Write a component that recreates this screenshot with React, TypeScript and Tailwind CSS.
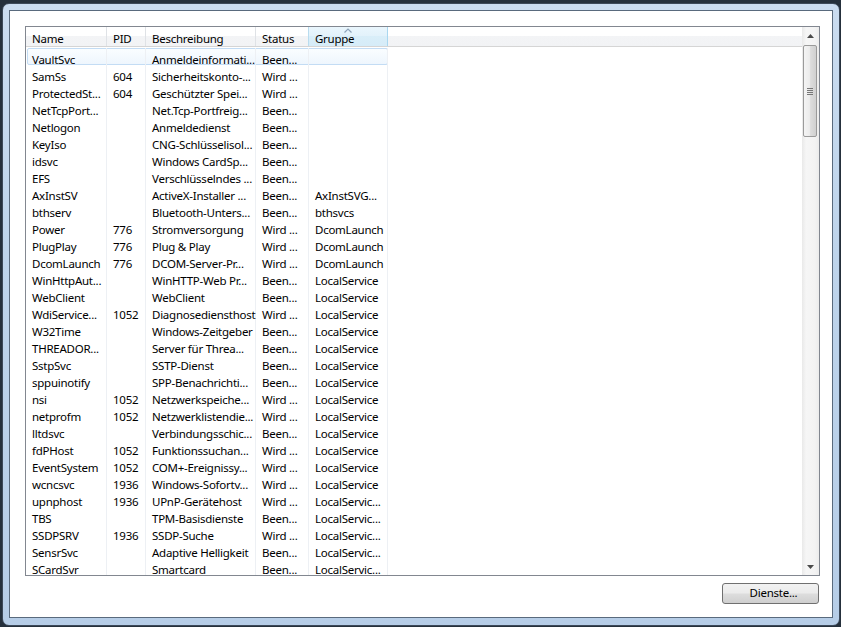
import React from 'react';

type Row = [string, string, string, string, string];

const rows: Row[] = [
  ['VaultSvc', '', 'Anmeldeinformati...', 'Been...', ''],
  ['SamSs', '604', 'Sicherheitskonto-...', 'Wird ...', ''],
  ['ProtectedSt...', '604', 'Geschützter Spei...', 'Wird ...', ''],
  ['NetTcpPort...', '', 'Net.Tcp-Portfreig...', 'Been...', ''],
  ['Netlogon', '', 'Anmeldedienst', 'Been...', ''],
  ['KeyIso', '', 'CNG-Schlüsselisol...', 'Been...', ''],
  ['idsvc', '', 'Windows CardSp...', 'Been...', ''],
  ['EFS', '', 'Verschlüsselndes ...', 'Been...', ''],
  ['AxInstSV', '', 'ActiveX-Installer ...', 'Been...', 'AxInstSVG...'],
  ['bthserv', '', 'Bluetooth-Unters...', 'Been...', 'bthsvcs'],
  ['Power', '776', 'Stromversorgung', 'Wird ...', 'DcomLaunch'],
  ['PlugPlay', '776', 'Plug & Play', 'Wird ...', 'DcomLaunch'],
  ['DcomLaunch', '776', 'DCOM-Server-Pr...', 'Wird ...', 'DcomLaunch'],
  ['WinHttpAut...', '', 'WinHTTP-Web Pr...', 'Been...', 'LocalService'],
  ['WebClient', '', 'WebClient', 'Been...', 'LocalService'],
  ['WdiService...', '1052', 'Diagnosediensthost', 'Wird ...', 'LocalService'],
  ['W32Time', '', 'Windows-Zeitgeber', 'Been...', 'LocalService'],
  ['THREADOR...', '', 'Server für Threa...', 'Been...', 'LocalService'],
  ['SstpSvc', '', 'SSTP-Dienst', 'Been...', 'LocalService'],
  ['sppuinotify', '', 'SPP-Benachrichti...', 'Been...', 'LocalService'],
  ['nsi', '1052', 'Netzwerkspeiche...', 'Wird ...', 'LocalService'],
  ['netprofm', '1052', 'Netzwerklistendie...', 'Wird ...', 'LocalService'],
  ['lltdsvc', '', 'Verbindungsschic...', 'Been...', 'LocalService'],
  ['fdPHost', '1052', 'Funktionssuchan...', 'Wird ...', 'LocalService'],
  ['EventSystem', '1052', 'COM+-Ereignissy...', 'Wird ...', 'LocalService'],
  ['wcncsvc', '1936', 'Windows-Sofortv...', 'Wird ...', 'LocalService'],
  ['upnphost', '1936', 'UPnP-Gerätehost', 'Wird ...', 'LocalServic...'],
  ['TBS', '', 'TPM-Basisdienste', 'Been...', 'LocalServic...'],
  ['SSDPSRV', '1936', 'SSDP-Suche', 'Wird ...', 'LocalServic...'],
  ['SensrSvc', '', 'Adaptive Helligkeit', 'Been...', 'LocalServic...'],
  ['SCardSvr', '', 'Smartcard', 'Been...', 'LocalServic...'],
];

// widths include the 1px separator on the right
const colWidths = ['w-[81px]', 'w-[39px]', 'w-[110px]', 'w-[53px]', 'w-[79px]'];
const headers = ['Name', 'PID', 'Beschreibung', 'Status', 'Gruppe'];

function Arrow({ down }: { down?: boolean }) {
  return (
    <svg width="7" height="4" viewBox="0 0 7 4">
      <polygon points={down ? '0,0 7,0 3.5,4' : '0,4 7,4 3.5,0'} fill="#4a4a4a" />
    </svg>
  );
}

function Header() {
  return (
    <div className="flex h-[23px] border-b border-[#d5d5d5] bg-[linear-gradient(180deg,#ffffff_0%,#ffffff_45%,#f3f4f6_46%,#f2f3f5_100%)]">
      {headers.map((h, i) => {
        const sorted = i === 4;
        return (
          <div
            key={h}
            className={`${colWidths[i]} relative flex h-full shrink-0 items-center border-r pl-[6px] pt-[5px] ${
              sorted
                ? 'border-[#a9d7f0] bg-[linear-gradient(180deg,#eaf6fd_0%,#e3f2fb_45%,#d9eef9_46%,#d6ecf8_100%)]'
                : i === 3
                ? 'border-[#b9dcef]'
                : 'border-[#dfe2e6]'
            }`}
          >
            {sorted && (
              <svg className="absolute left-[35px] top-[1px]" width="8" height="5" viewBox="0 0 8 5">
                <polyline points="0.5,4.5 4,1 7.5,4.5" fill="none" stroke="#8ea4bb" strokeWidth="1.2" />
              </svg>
            )}
            {h}
          </div>
        );
      })}
      <div className="flex-1" />
    </div>
  );
}

function Scrollbar() {
  return (
    <div className="flex w-[17px] shrink-0 flex-col bg-[linear-gradient(90deg,#e9e9e9_0%,#f6f6f6_25%,#f3f3f3_75%,#ececec_100%)]">
      <div className="flex h-[17px] items-center justify-center">
        <Arrow />
      </div>
      <div className="mx-[1px] mt-[1px] flex h-[92px] w-[14px] items-center justify-center rounded-[2px] border border-[#9a9a9a] bg-[linear-gradient(90deg,#f4f4f4_0%,#ececec_45%,#dcdcdc_55%,#d0d0d0_100%)]">
        <div className="flex flex-col gap-[1px]">
          <div className="h-[1px] w-[6px] bg-[#777]" />
          <div className="h-[1px] w-[6px] bg-[#777]" />
          <div className="h-[1px] w-[6px] bg-[#777]" />
          <div className="h-[1px] w-[6px] bg-[#777]" />
        </div>
      </div>
      <div className="flex-1" />
      <div className="flex h-[17px] items-center justify-center">
        <Arrow down />
      </div>
    </div>
  );
}

function ServiceList() {
  return (
    <div className="flex h-[550px] w-[795px] border border-[#828790] bg-white">
      <div className="flex min-w-0 flex-1 flex-col overflow-hidden">
        <Header />
        <div className="pt-[1px]">
          {rows.map((r, idx) => (
            <div key={idx} className="relative flex h-[17px]">
              {idx === 0 && (
                <div className="absolute left-[1px] top-0 h-[17px] w-[361px] rounded-[2px] border border-[#c3dcf4] bg-[linear-gradient(180deg,#fafdff_0%,#eef6fd_100%)]" />
              )}
              {r.map((c, i) => (
                <div
                  key={i}
                  className={`${colWidths[i]} relative h-full shrink-0 whitespace-nowrap border-r border-[#edf0f4] pl-[6px] pt-[6px] leading-[11px]`}
                >
                  {c}
                </div>
              ))}
            </div>
          ))}
        </div>
      </div>
      <Scrollbar />
    </div>
  );
}

export default function App() {
  return (
    <div className="h-[627px] w-[841px] overflow-hidden bg-[#25303c] pl-[2px] pt-[3px] font-['Noto_Sans',sans-serif] text-[11.5px] leading-none tracking-[-0.25px] text-black">
      <div className="h-[623px] w-[838px] rounded-[7px] border border-[#3c4959] bg-[linear-gradient(180deg,#cadcf0_0%,#bed4eb_40%,#b6cde7_100%)] pl-[6px] pt-[6px]">
        <div className="h-[608px] w-[824px] border border-[#596a7d] bg-white pl-[15px] pt-[15px]">
          <ServiceList />
          <div className="mt-[7px] flex w-[795px] justify-end">
            <button className="mr-[1px] flex h-[21px] w-[97px] items-center justify-center rounded-[3px] border border-[#707070] bg-[linear-gradient(180deg,#f2f2f2_0%,#ebebeb_48%,#dddddd_52%,#cfcfcf_100%)] pb-[1px] pl-[6px]">
              Dienste...
            </button>
          </div>
        </div>
      </div>
    </div>
  );
}
